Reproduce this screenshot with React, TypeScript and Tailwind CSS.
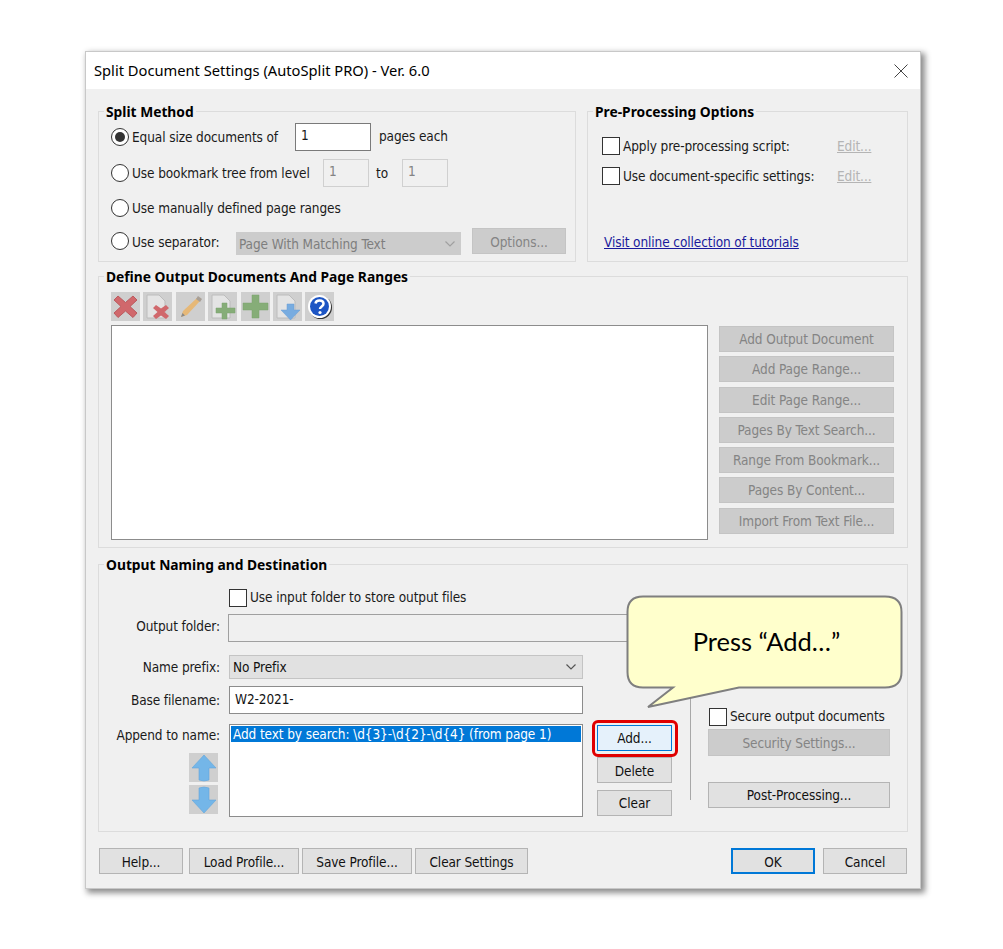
import React from "react";

const Btn = ({ children, w, h = 26, disabled, cls = "" }: { children: React.ReactNode; w: string; h?: number; disabled?: boolean; cls?: string }) => (
  <div
    className={`flex shrink-0 items-center justify-center whitespace-nowrap border ${w} ${h === 26 ? "h-[26px]" : "h-[27px]"} ${
      disabled ? "border-[#c4c4c4] bg-[#cccccc] text-[#848484]" : "border-[#b4b4b4] bg-[#e1e1e1] text-[#111]"
    } ${cls}`}
  >
    {children}
  </div>
);

const Radio = ({ on }: { on?: boolean }) => (
  <span className="flex h-[18px] w-[18px] shrink-0 items-center justify-center rounded-full border border-[#333] bg-white">
    {on && <span className="h-[10px] w-[10px] rounded-full bg-[#333]" />}
  </span>
);

const Check = () => <span className="block h-[18px] w-[18px] shrink-0 border border-[#333] bg-white" />;

const Legend = ({ children }: { children: React.ReactNode }) => (
  <div className="absolute left-[5px] top-[-9px] whitespace-nowrap bg-[#f0f0f0] px-[2px] text-[13.800px] font-bold leading-[18px] tracking-normal text-black" style={{ fontFamily: '"Noto Sans", sans-serif' }}>
    {children}
  </div>
);

const Chevron = ({ color }: { color: string }) => (
  <svg width="12" height="8" viewBox="0 0 12 8" fill="none">
    <path d="M1.5 1.5 L6 6 L10.5 1.5" stroke={color} strokeWidth="1.2" />
  </svg>
);

const ToolBtn = ({ children }: { children: React.ReactNode }) => (
  <div className="flex h-[29px] w-[29px] shrink-0 items-center justify-center bg-[#cfcfcf]">{children}</div>
);

const Page = () => <path d="M3 2 H15 L21 8 V25 H3 Z" fill="#e4e4e4" stroke="#bcbcbc" />;

const Toolbar = () => (
  <div className="flex h-[29px] gap-[3.400px]">
    <ToolBtn>
      <svg width="27" height="27" viewBox="0 0 27 27">
        <path d="M6 3 L13.500 9.500 L21 3 L25 7 L18 13.500 L25 20 L21 24.500 L13.500 18 L6 24.500 L2 20 L9 13.500 L2 7 Z" fill="#d0686c" stroke="#bb5a5e" />
      </svg>
    </ToolBtn>
    <ToolBtn>
      <svg width="27" height="27" viewBox="0 0 27 27">
        <Page />
        <path d="M12 12 L17 15.500 L22 12 L25 15 L20.500 19 L25 23 L22 26 L17 22.500 L12 26 L9 23 L13.500 19 L9 15 Z" fill="#d0686c" />
      </svg>
    </ToolBtn>
    <ToolBtn>
      <svg width="27" height="27" viewBox="0 0 27 27">
        <path d="M4 24 L6 18 L20 5 L23 8 L10 22 Z" fill="#e6b877" />
        <path d="M19 6 L21 3 L25 6 L23 9 Z" fill="#a89f96" />
        <path d="M4 24 L5.500 20 L8 22.500 Z" fill="#8a8a8a" />
      </svg>
    </ToolBtn>
    <ToolBtn>
      <svg width="27" height="27" viewBox="0 0 27 27">
        <Page />
        <path d="M13 10 H18 V15 H26 V20 H18 V26 H13 V20 H7 V15 H13 Z" fill="#86ad78" stroke="#7aa06c" strokeWidth="0.5" />
      </svg>
    </ToolBtn>
    <ToolBtn>
      <svg width="27" height="27" viewBox="0 0 27 27">
        <path d="M10 2 H17 V10 H26 V17 H17 V25 H10 V17 H1 V10 H10 Z" fill="#86ad78" stroke="#7aa06c" strokeWidth="0.5" />
      </svg>
    </ToolBtn>
    <ToolBtn>
      <svg width="27" height="27" viewBox="0 0 27 27">
        <Page />
        <path d="M13 11 H20 V17 H26 L16.500 27 L7 17 H13 Z" fill="#78ace0" stroke="#6a9ed4" strokeWidth="0.5" />
      </svg>
    </ToolBtn>
    <ToolBtn>
      <svg width="27" height="27" viewBox="0 0 27 27">
        <circle cx="14.500" cy="14.500" r="11.500" fill="#333" />
        <circle cx="13.500" cy="13.500" r="11.500" fill="#fff" />
        <circle cx="13.500" cy="13.500" r="9.500" fill="#1d55c4" />
        <path d="M9.500 10.500 C10 6.500 17.500 6.500 17.500 10.800 C17.500 13.500 14 13.500 14 16" fill="none" stroke="#fff" strokeWidth="2.500" />
        <circle cx="14" cy="19.500" r="1.600" fill="#fff" />
      </svg>
    </ToolBtn>
  </div>
);

const ArrowBtn = ({ down }: { down?: boolean }) => (
  <div className="flex h-[29px] w-[29px] items-center justify-center bg-[#cfcfcf]">
    <svg width="26" height="28" viewBox="0 0 26 28" className={down ? "rotate-180" : ""}>
      <path d="M13 1 L25 14 H18 V26 Q13 28 8 26 V14 H1 Z" fill="#74b6e8" stroke="#62a6dc" strokeWidth="0.6" />
    </svg>
  </div>
);

const defineButtons = [
  "Add Output Document",
  "Add Page Range...",
  "Edit Page Range...",
  "Pages By Text Search...",
  "Range From Bookmark...",
  "Pages By Content...",
  "Import From Text File...",
];

export default function App() {
  return (
    <div
      className="relative h-[949px] w-[1003px] overflow-hidden bg-white pl-[85px] pt-[51px] text-[13.500px] leading-[18px] tracking-[-0.1px] text-[#1a1a1a]"
      style={{ fontFamily: '"DejaVu Sans Condensed", "DejaVu Sans", sans-serif', fontStretch: "condensed" }}
    >
      {/* Dialog */}
      <div className="flex h-[838px] w-[836px] flex-col border border-[#c8c8c8] bg-[#f0f0f0] shadow-[3px_3px_6px_1px_rgba(0,0,0,0.45)]">
        <div
          className="flex h-[37px] shrink-0 items-center justify-between bg-white pl-[8px] pr-[11px] text-[14.700px] tracking-normal text-black"
          style={{ fontFamily: '"Noto Sans", sans-serif' }}
        >
          <span className="-translate-y-px">Split Document Settings (AutoSplit PRO) - Ver. 6.0</span>
          <svg width="16" height="16" viewBox="0 0 16 16" fill="none">
            <path d="M1.500 1.500 L14.500 14.500 M14.500 1.500 L1.500 14.500" stroke="#444" strokeWidth="1" />
          </svg>
        </div>

        <div className="flex flex-col pl-[12px] pt-[22px]">
          {/* Top row */}
          <div className="flex gap-[11px]">
            <div className="relative flex h-[151px] w-[478px] flex-col border border-[#dcdcdc]">
              <Legend>Split Method</Legend>
              <div className="ml-[12px] mt-[11px] flex h-[28px] items-center">
                <Radio on />
                <span className="ml-[3px] w-[163px] whitespace-nowrap">Equal size documents of</span>
                <div className="flex h-[28px] w-[76px] items-start border border-[#7a7a7a] bg-white pl-[5px] pt-[2px]">1</div>
                <span className="ml-[8px] -translate-y-px whitespace-nowrap">pages each</span>
              </div>
              <div className="ml-[12px] mt-[8px] flex h-[28px] items-center">
                <Radio />
                <span className="ml-[3px] w-[191px] whitespace-nowrap">Use bookmark tree from level</span>
                <div className="h-[28px] w-[46px] border border-[#d0d0d0] pl-[5px] pt-[2px] text-[#848484]">1</div>
                <span className="ml-[7px] w-[26px]">to</span>
                <div className="h-[28px] w-[46px] border border-[#d0d0d0] pl-[5px] pt-[2px] text-[#848484]">1</div>
              </div>
              <div className="ml-[12px] mt-[7px] flex h-[28px] items-center">
                <Radio />
                <span className="ml-[3px] whitespace-nowrap">Use manually defined page ranges</span>
              </div>
              <div className="ml-[12px] mt-[5px] flex h-[28px] items-center">
                <Radio />
                <span className="ml-[3px] w-[104px] translate-y-px whitespace-nowrap">Use separator:</span>
                <div className="mt-[4px] flex h-[23px] w-[225px] items-center justify-between bg-[#cccccc] pl-[3px] pr-[5px] pt-[1px] text-[#7e7e7e]">
                  <span>Page With Matching Text</span>
                  <Chevron color="#a0a0a0" />
                </div>
                <Btn w="w-[94px]" disabled cls="ml-[11px] pt-[1px]">
                  Options...
                </Btn>
              </div>
            </div>

            <div className="relative flex h-[151px] w-[321px] flex-col border border-[#dcdcdc]">
              <Legend>Pre-Processing Options</Legend>
              <div className="ml-[14px] mt-[24px] flex h-[20px] items-center">
                <Check />
                <span className="ml-[3px] w-[214px] whitespace-nowrap">Apply pre-processing script:</span>
                <span className="text-[#b4b4b4] underline">Edit...</span>
              </div>
              <div className="ml-[14px] mt-[10px] flex h-[20px] items-center">
                <Check />
                <span className="ml-[3px] w-[214px] whitespace-nowrap">Use document-specific settings:</span>
                <span className="text-[#b4b4b4] underline">Edit...</span>
              </div>
              <div className="ml-[16px] mt-[47px] whitespace-nowrap text-[#1a1a9c] underline">Visit online collection of tutorials</div>
            </div>
          </div>

          {/* Define */}
          <div className="relative mt-[14px] flex h-[272px] w-[810px] flex-col border border-[#dcdcdc] pl-[12px] pt-[15px]">
            <Legend>Define Output Documents And Page Ranges</Legend>
            <Toolbar />
            <div className="mt-[4px] flex">
              <div className="h-[215px] w-[597px] border border-[#8c8c8c] bg-white" />
              <div className="ml-[11px] mt-px flex flex-col gap-[4.300px]">
                {defineButtons.map((b) => (
                  <Btn key={b} w="w-[175px]" disabled>
                    {b}
                  </Btn>
                ))}
              </div>
            </div>
          </div>

          {/* Output */}
          <div className="relative mt-[16px] flex h-[268px] w-[810px] flex-col border border-[#dcdcdc]">
            <Legend>Output Naming and Destination</Legend>
            <div className="ml-[130px] mt-[24px] flex h-[18px] items-center">
              <Check />
              <span className="ml-[3px] -translate-y-px whitespace-nowrap">Use input folder to store output files</span>
            </div>
            <div className="mt-[7px] flex h-[28px] items-center">
              <span className="w-[121px] -translate-y-[2px] text-right">Output folder:</span>
              <div className="ml-[8px] h-[28px] w-[460px] border border-[#a0a0a0]" />
            </div>
            <div className="mt-[13px] flex">
              <div className="flex w-[591px] flex-col">
                <div className="flex h-[24px] items-center">
                  <span className="w-[121px] text-right">Name prefix:</span>
                  <div className="ml-[9px] flex h-[24px] w-[354px] items-center justify-between border border-[#c4c4c4] bg-[#e1e1e1] pl-[3px] pr-[5px] text-[#111]">
                    <span>No Prefix</span>
                    <Chevron color="#555" />
                  </div>
                </div>
                <div className="mt-[7px] flex h-[28px] items-center">
                  <span className="w-[121px] text-right">Base filename:</span>
                  <div className="ml-[9px] h-[28px] w-[354px] border border-[#8c8c8c] bg-white pl-[5px] pt-[3px] text-[#111]">W2-2021-</div>
                </div>
                <div className="mt-[10px] flex">
                  <div className="flex w-[121px] flex-col items-end">
                    <span className="mt-[2px] whitespace-nowrap">Append to name:</span>
                    <div className="mr-[2px] mt-[9px] flex flex-col gap-[3px]">
                      <ArrowBtn />
                      <ArrowBtn down />
                    </div>
                  </div>
                  <div className="ml-[9px] h-[93px] w-[354px] border border-[#8c8c8c] bg-white pl-[1px] pr-px pt-[1px]">
                    <div className="h-[16px] whitespace-nowrap bg-[#0078d7] pl-[2px] leading-[16px] text-white">
                      Add text by search: \d{"{"}3{"}"}-\d{"{"}2{"}"}-\d{"{"}4{"}"} (from page 1)
                    </div>
                  </div>
                  <div className="ml-[14px] flex flex-col">
                    <Btn w="w-[75px]" cls="mt-[1px] !border-[#0078d7] !bg-[#e5f1fb]">
                      Add...
                    </Btn>
                    <Btn w="w-[75px]" cls="mt-[6px] pt-[1px]">
                      Delete
                    </Btn>
                    <Btn w="w-[75px]" cls="mt-[7px]">
                      Clear
                    </Btn>
                  </div>
                </div>
              </div>
              <div className="mb-[17px] w-px bg-[#a8a8a8]" />
              <div className="ml-[17px] flex flex-col">
                <div className="ml-px mt-[53px] flex h-[18px] items-center">
                  <Check />
                  <span className="ml-[3px] -translate-y-px whitespace-nowrap">Secure output documents</span>
                </div>
                <Btn w="w-[182px]" h={27} disabled cls="mt-[3px]">
                  Security Settings...
                </Btn>
                <Btn w="w-[182px]" cls="mt-[26px]">
                  Post-Processing...
                </Btn>
              </div>
            </div>
          </div>

          {/* Footer */}
          <div className="mt-[16px] flex h-[26px] w-[809px] pl-px">
            <Btn w="w-[84px]" cls="pt-[1px]">Help...</Btn>
            <Btn w="w-[110px]" cls="ml-[6px] pt-[1px]">
              Load Profile...
            </Btn>
            <Btn w="w-[110px]" cls="ml-[3px] pt-[1px]">
              Save Profile...
            </Btn>
            <Btn w="w-[113px]" cls="ml-[3px] pt-[1px]">
              Clear Settings
            </Btn>
            <Btn w="w-[84px]" cls="ml-auto pt-[1px] !border-2 !border-[#0078d7]">
              OK
            </Btn>
            <Btn w="w-[84px]" cls="ml-[8px] pt-[1px]">
              Cancel
            </Btn>
          </div>
        </div>
      </div>

      {/* Callout overlay */}
      <div className="absolute left-[626px] top-[595px] h-[114px] w-[277px]">
        <svg width="277" height="114" viewBox="0 0 277 114" className="absolute inset-0">
          <path
            d="M17 1.500 H259 Q275.500 1.500 275.500 17 V77 Q275.500 92.500 259 92.500 H113 L22 112 L47 92.500 H17 Q1.500 92.500 1.500 77 V17 Q1.500 1.500 17 1.500 Z"
            fill="#ffffcc"
            stroke="#7f7f7f"
            strokeWidth="2"
          />
        </svg>
        <div
          className="absolute left-[2px] top-[30px] w-full text-center text-[25.500px] leading-[32px] tracking-normal text-black"
          style={{ fontFamily: "Lato, sans-serif" }}
        >
          Press “Add…”
        </div>
      </div>

      {/* Highlight ring */}
      <div className="absolute left-[592px] top-[720px] h-[37px] w-[86px] rounded-[6px] border-[3px] border-[#e00000]" />
    </div>
  );
}
